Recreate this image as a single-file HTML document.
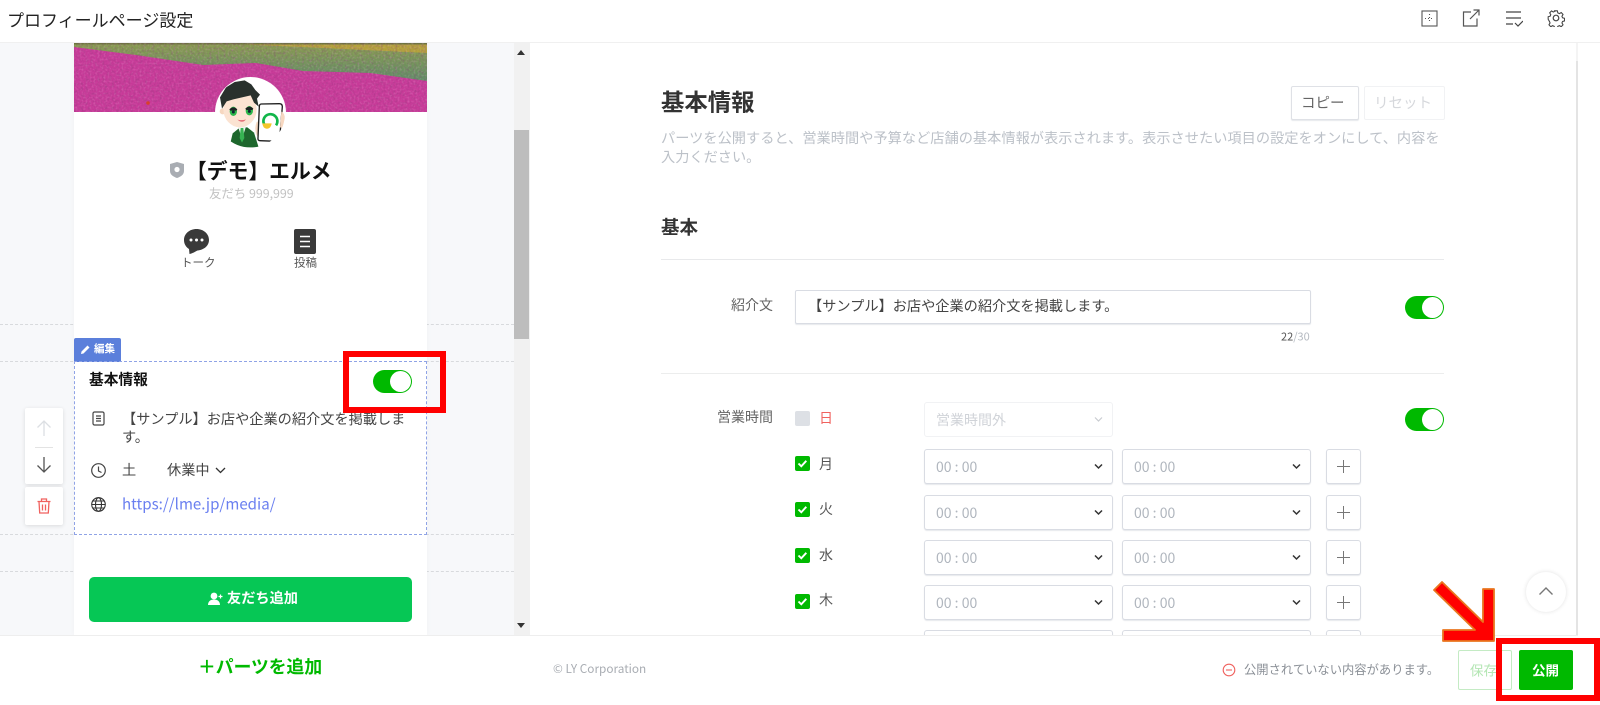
<!DOCTYPE html>
<html lang="ja"><head><meta charset="utf-8"><title>プロフィールページ設定</title>
<style>
*{box-sizing:border-box}
html,body{margin:0;padding:0;width:1600px;height:705px;overflow:hidden;background:#fff;font-family:"Noto Sans CJK JP","Liberation Sans",sans-serif;color:#333}
.a{position:absolute}
.t{position:absolute;white-space:nowrap;line-height:1;transform:translateY(-50%)}
.b{font-weight:700}
.sel{position:absolute;background:#fff;border:1px solid #d9dce3;border-radius:3px;box-shadow:0 1px 1px #e6e8ec}
.sel span{position:absolute;left:11px;top:50%;transform:translateY(-50%);font-size:14px;line-height:1;color:#b0b6be;white-space:nowrap}
.sel svg{position:absolute;right:9px;top:50%;margin-top:-4px}
.plus{position:absolute;width:35px;background:#fff;border:1px solid #d9dce3;border-radius:3px;box-shadow:0 1px 1px #e6e8ec}
.plus:before{content:"";position:absolute;left:10px;top:16px;width:13px;height:1px;background:#777}
.plus:after{content:"";position:absolute;left:16px;top:10px;width:1px;height:13px;background:#777}
.tog{position:absolute;width:39px;height:23px;background:#00b900;border-radius:12px}
.tog:after{content:"";position:absolute;right:1px;top:1px;width:21px;height:21px;background:#fff;border-radius:50%}
.cb{position:absolute;left:795px;width:15px;height:15px;background:#00b900;border-radius:2px}
.cb svg{display:block}
.dash{position:absolute;left:0;width:514px;border-top:1px dashed #d8dadd}
.rr{position:absolute;border:6px solid #f00}
</style></head><body>

<!-- left pane -->
<div class="a" style="left:0;top:43px;width:530px;height:592px;background:#f7f8fa"></div>
<div class="dash" style="top:324px"></div><div class="dash" style="top:361px"></div><div class="dash" style="top:534px"></div><div class="dash" style="top:571px"></div>
<div class="a" style="left:74px;top:43px;width:353px;height:592px;background:#fff;box-shadow:0 0 6px rgba(0,0,0,.03)"></div>

<!-- banner -->
<svg class="a" style="left:74px;top:43px" width="353" height="69" viewBox="0 0 353 69">
<defs>
<filter id="n" x="0" y="0" width="100%" height="100%"><feTurbulence type="fractalNoise" baseFrequency=".42" numOctaves="2" seed="4"/><feColorMatrix values="0 0 0 0 .25  0 0 0 0 .05  0 0 0 0 .2  0 0 0 1.6 -.72"/></filter>
<filter id="m" x="0" y="0" width="100%" height="100%"><feTurbulence type="fractalNoise" baseFrequency=".5" numOctaves="2" seed="9"/><feColorMatrix values="0 0 0 0 .95  0 0 0 0 .5  0 0 0 0 .8  0 0 0 1.6 -.72"/></filter>
<linearGradient id="g" x1="0" y1="0" x2="0" y2="1"><stop offset="0" stop-color="#8a9c4e"/><stop offset="1" stop-color="#5f8d66"/></linearGradient>
</defs>
<rect width="353" height="69" fill="#c73a98"/>
<path d="M0 4 L62 12 L129 22 L182 20 L229 28 L296 30 L353 38 V0 H0Z" fill="url(#g)"/>
<path d="M136 0 H353 V10 L250 5Z" fill="#b3a23a"/>
<rect x="0" y="0" width="353" height="1.500" fill="#6d7440"/>
<rect width="353" height="69" filter="url(#n)" opacity=".6"/>
<rect width="353" height="69" filter="url(#m)" opacity=".35"/>
<circle cx="74" cy="60" r="1.800" fill="#d8402a"/>
</svg>

<!-- avatar -->
<svg class="a" style="left:215px;top:77px" width="71" height="71" viewBox="15 15 213 213">
<defs><clipPath id="c"><circle cx="121.500" cy="121.500" r="105"/></clipPath></defs>
<circle cx="121.500" cy="121.500" r="106.500" fill="#fff"/>
<g clip-path="url(#c)">
<path d="M58 226 L68 184 L90 166 L112 166 L132 182 L146 226Z" fill="#1e672d"/>
<path d="M84 164 L96 200 L108 164Z" fill="#eef5ee"/>
<path d="M92 168h8l3 30-7 14-7-14z" fill="#37b352"/>
<circle cx="38" cy="118" r="9" fill="#f6d7c0"/>
<ellipse cx="90" cy="112" rx="50" ry="54" fill="#fbe3d2"/>
<path d="M36 110 L30 76 L48 46 L74 30 L104 25 L124 37 L136 54 L150 68 L141 80 L146 104 L132 92 L122 70 L96 76 L70 82 L50 88Z" fill="#29312d"/>
<ellipse cx="70" cy="118" rx="11" ry="14" fill="#2cb84c"/><ellipse cx="118" cy="116" rx="11" ry="14" fill="#2cb84c"/>
<path d="M58 112 q12 -12 24 0 l-3 4 h-18z" fill="#1c2422"/><path d="M106 110 q12 -12 24 0 l-3 4 h-18z" fill="#1c2422"/>
<circle cx="70" cy="120" r="4.500" fill="#123"/><circle cx="118" cy="118" r="4.500" fill="#123"/>
<path d="M82 143 q13 3 26 -1 q-11 14 -26 1z" fill="#e56f78"/>
<path d="M140 150 q-8 20 0 40 l10 6 v-50z" fill="#f6d7c0"/>
<path d="M154 96 L208 95 Q217 95 217 104 L209 200 Q209 208 200 208 L150 206 Q143 206 144 198 L148 104 Q148 96 154 96Z" fill="#fff" stroke="#1e1e1e" stroke-width="4"/>
<path d="M163 158 A21 21 0 1 1 198 160" fill="none" stroke="#11b64a" stroke-width="8"/>
<path d="M157 154 h28 q-3 18 -17 16 q-9 -2 -11 -16z" fill="#f3c62c"/>
<path d="M214 118 q12 8 10 22 l-6 28 -8 -2z" fill="#f6d7c0"/>
</g>
</svg>

<svg class="a" style="left:169px;top:161px" width="16" height="18" viewBox="0 0 16 18"><path d="M1 3 L8 1 L15 3 V10 C15 14 11 16 8 17 C5 16 1 14 1 10Z" fill="#a9adb3"/><circle cx="8" cy="8.500" r="2.600" fill="#fff"/></svg>
<div class="t b" style="left:186px;top:170px;font-size:20.800px;color:#111">【デモ】エルメ</div>
<div class="t" style="left:209px;top:193px;font-size:12.400px;color:#c2c2c2">友だち 999,999</div>

<svg class="a" style="left:183px;top:228px" width="27" height="27" viewBox="0 0 27 27"><path d="M13.500 1C6.500 1 1 5.800 1 12c0 4 2 7 5 9l.5 5c3-.5 6-2.500 8-3.500C20.500 22 26 18 26 12 26 5.800 20.500 1 13.500 1Z" fill="#3a3a3a"/><circle cx="8" cy="12" r="1.500" fill="#fff"/><circle cx="13.500" cy="12" r="1.500" fill="#fff"/><circle cx="19" cy="12" r="1.500" fill="#fff"/></svg>
<div class="t" style="left:181px;top:263px;font-size:11.500px;color:#555">トーク</div>
<svg class="a" style="left:294px;top:229px" width="22" height="25" viewBox="0 0 22 25"><rect width="22" height="25" rx="2" fill="#3a3a3a"/><path d="M6 7.500h10M6 12.500h10M6 17.500h10" stroke="#fff" stroke-width="1.600"/></svg>
<div class="t" style="left:294px;top:263px;font-size:11.500px;color:#555">投稿</div>

<!-- edit box -->
<div class="a" style="left:74px;top:338px;width:47px;height:24px;background:#5b7fdb;border-radius:2px 2px 0 0"></div>
<svg class="a" style="left:80px;top:344px" width="11" height="11" viewBox="0 0 11 11"><path d="M1 10 L1.500 7.500 L7.500 1.500 L9.500 3.500 L3.500 9.500Z" fill="#fff"/></svg>
<div class="t b" style="left:94px;top:349px;font-size:10.500px;color:#fff">編集</div>
<div class="a" style="left:74px;top:361px;width:353px;height:174px;border:1px dashed #8fa3e6"></div>
<div class="t b" style="left:89px;top:380px;font-size:14.700px;color:#111">基本情報</div>
<div class="tog" style="left:373px;top:370px"></div>

<svg class="a" style="left:91px;top:410px" width="15" height="17" viewBox="0 0 15 17" fill="none" stroke="#444" stroke-width="1.200"><rect x="2" y="2" width="11" height="13" rx="1.500"/><path d="M5 6h5M5 8.500h5M5 11h5"/></svg>
<div class="t" style="left:122px;top:419px;font-size:14.200px;color:#444">【サンプル】お店や企業の紹介文を掲載しま</div>
<div class="t" style="left:122px;top:437px;font-size:14.200px;color:#444">す。</div>
<svg class="a" style="left:90px;top:462px" width="17" height="17" viewBox="0 0 17 17" fill="none" stroke="#444" stroke-width="1.200"><circle cx="8.500" cy="8.500" r="6.800"/><path d="M8.500 4.500v4.500l3 1.500"/></svg>
<div class="t" style="left:122px;top:470px;font-size:14.200px;color:#444">土</div>
<div class="t" style="left:167px;top:470px;font-size:14.200px;color:#444">休業中</div>
<svg class="a" style="left:215px;top:467px" width="11" height="7" viewBox="0 0 11 7"><path d="M1 1l4.500 4.500L10 1" fill="none" stroke="#333" stroke-width="1.300"/></svg>
<svg class="a" style="left:90px;top:496px" width="17" height="17" viewBox="0 0 17 17" fill="none" stroke="#333" stroke-width="1.100"><circle cx="8.500" cy="8.500" r="6.800"/><ellipse cx="8.500" cy="8.500" rx="3" ry="6.800"/><path d="M1.700 8.500h13.600M2.600 5h11.800M2.600 12h11.800"/></svg>
<div class="t" style="left:122px;top:504px;font-size:15.100px;color:#6a7ff0">https://lme.jp/media/</div>

<!-- side buttons -->
<div class="a" style="left:25px;top:408px;width:38px;height:76px;background:#fff;box-shadow:0 1px 4px rgba(0,0,0,.12);border-radius:2px"></div>
<svg class="a" style="left:36px;top:419px" width="16" height="18" viewBox="0 0 16 18" fill="none" stroke="#dcdfe3" stroke-width="1.300"><path d="M8 17V2M1.500 8.500L8 2l6.500 6.500"/></svg>
<div class="a" style="left:35px;top:447px;width:18px;height:1px;background:#e3e3e3"></div>
<svg class="a" style="left:36px;top:456px" width="16" height="18" viewBox="0 0 16 18" fill="none" stroke="#555" stroke-width="1.300"><path d="M8 1v15M1.500 9.500L8 16l6.500-6.500"/></svg>
<div class="a" style="left:25px;top:487px;width:38px;height:38px;background:#fff;box-shadow:0 1px 4px rgba(0,0,0,.12);border-radius:2px"></div>
<svg class="a" style="left:37px;top:498px" width="14" height="16" viewBox="0 0 14 16" fill="none" stroke="#f0625f" stroke-width="1.300"><path d="M.5 3.500h13M4.500 3.500V1h5v2.500M2 3.500l.7 11.500h8.600L12 3.500M5.500 6.500v6M8.500 6.500v6"/></svg>

<div class="a" style="left:89px;top:577px;width:323px;height:45px;background:#06c755;border-radius:5px"></div>
<svg class="a" style="left:208px;top:592px" width="15" height="14" viewBox="0 0 15 14"><circle cx="6" cy="4" r="3.400" fill="#fff"/><path d="M0 13c0-4 3-5.500 6-5.500s6 1.500 6 5.500Z" fill="#fff"/><path d="M10.500 4.500h4M12.500 2.500v4" stroke="#fff" stroke-width="1.200"/></svg>
<div class="t b" style="left:227px;top:598px;font-size:14.200px;color:#fff">友だち追加</div>

<!-- scrollbar -->
<div class="a" style="left:514px;top:43px;width:16px;height:592px;background:#f1f1f1"></div>
<div class="a" style="left:514px;top:130px;width:15px;height:209px;background:#bdbdbd"></div>
<svg class="a" style="left:516px;top:49px" width="10" height="6"><path d="M1 6 L5 1 L9 6Z" fill="#333"/></svg>
<svg class="a" style="left:516px;top:623px" width="10" height="6"><path d="M1 0 L5 5 L9 0Z" fill="#333"/></svg>

<!-- right pane -->
<div class="a" style="left:530px;top:43px;width:1048px;height:592px;background:#fff"></div>
<div class="a" style="left:1576px;top:43px;width:2px;height:592px;background:#f4f4f4"></div>
<div class="a" style="left:1576px;top:61px;width:2px;height:574px;background:#e4e4e4"></div>

<div class="t b" style="left:661px;top:101px;font-size:23.400px;color:#333">基本情報</div>
<div class="a" style="left:1291px;top:86px;width:68px;height:34px;background:#fff;border:1px solid #dfe1e6;border-radius:2px;box-shadow:0 1px 1px #e6e8ec"></div>
<div class="t" style="left:1301px;top:103px;font-size:14.500px;color:#666">コピー</div>
<div class="a" style="left:1364px;top:86px;width:81px;height:34px;background:#fff;border:1px solid #f1f2f4;border-radius:2px"></div>
<div class="t" style="left:1374px;top:103px;font-size:14.500px;color:#d6d8dc">リセット</div>
<div class="t" style="left:661px;top:138px;font-size:14.200px;color:#bcc1c8;letter-spacing:.03px">パーツを公開すると、営業時間や予算など店舗の基本情報が表示されます。表示させたい項目の設定をオンにして、内容を</div>
<div class="t" style="left:661px;top:157px;font-size:14.200px;color:#bcc1c8">入力ください。</div>
<div class="t b" style="left:661px;top:227px;font-size:18.500px;color:#333">基本</div>
<div class="a" style="left:661px;top:259px;width:783px;height:1px;background:#e8e9eb"></div>
<div class="t" style="left:731px;top:305px;font-size:14px;color:#666">紹介文</div>
<div class="a" style="left:795px;top:290px;width:516px;height:34px;background:#fff;border:1px solid #d9dce3;border-radius:2px;box-shadow:0 1px 1px #e6e8ec"></div>
<div class="t" style="left:808px;top:306px;font-size:14.200px;color:#444">【サンプル】お店や企業の紹介文を掲載します。</div>
<div class="tog" style="left:1405px;top:296px"></div>
<div class="t" style="left:1281px;top:337px;font-size:11px;color:#555">22<span style="color:#b5bac1">/30</span></div>
<div class="a" style="left:661px;top:373px;width:783px;height:1px;background:#eceded"></div>

<div class="t" style="left:717px;top:417px;font-size:14px;color:#666">営業時間</div>
<div class="a" style="left:795px;top:411px;width:15px;height:15px;background:#dde0e5;border-radius:2px"></div>
<div class="t" style="left:819px;top:418px;font-size:14px;color:#f0625f">日</div>
<div class="sel" style="left:924px;top:402px;width:189px;height:35px;border-color:#f1f2f4;box-shadow:none"><span style="color:#d0d3d8">営業時間外</span><svg width="9" height="7" viewBox="0 0 9 7"><path d="M1 1.500l3.500 3.500L8 1.500" fill="none" stroke="#c9ccd1" stroke-width="1.200"/></svg></div>
<div class="tog" style="left:1405px;top:408px"></div>

<svg width="0" height="0" style="position:absolute"><defs><path id="ck" d="M3.500 7.500l2.800 2.800 5-5.500" fill="none" stroke="#fff" stroke-width="1.900"/><path id="ch" d="M1 1.500l3.500 3.500L8 1.500" fill="none" stroke="#333" stroke-width="1.500"/></defs></svg>

<div class="cb" style="top:456px"><svg width="15" height="15"><use href="#ck"/></svg></div>
<div class="t" style="left:819px;top:464px;font-size:14px;color:#555">月</div>
<div class="sel" style="left:924px;top:449px;width:189px;height:35px"><span>00 : 00</span><svg width="9" height="7"><use href="#ch"/></svg></div>
<div class="sel" style="left:1122px;top:449px;width:189px;height:35px"><span>00 : 00</span><svg width="9" height="7"><use href="#ch"/></svg></div>
<div class="plus" style="left:1326px;top:449px;height:35px"></div>

<div class="cb" style="top:502px"><svg width="15" height="15"><use href="#ck"/></svg></div>
<div class="t" style="left:819px;top:509px;font-size:14px;color:#555">火</div>
<div class="sel" style="left:924px;top:495px;width:189px;height:35px"><span>00 : 00</span><svg width="9" height="7"><use href="#ch"/></svg></div>
<div class="sel" style="left:1122px;top:495px;width:189px;height:35px"><span>00 : 00</span><svg width="9" height="7"><use href="#ch"/></svg></div>
<div class="plus" style="left:1326px;top:495px;height:35px"></div>

<div class="cb" style="top:548px"><svg width="15" height="15"><use href="#ck"/></svg></div>
<div class="t" style="left:819px;top:555px;font-size:14px;color:#555">水</div>
<div class="sel" style="left:924px;top:540px;width:189px;height:35px"><span>00 : 00</span><svg width="9" height="7"><use href="#ch"/></svg></div>
<div class="sel" style="left:1122px;top:540px;width:189px;height:35px"><span>00 : 00</span><svg width="9" height="7"><use href="#ch"/></svg></div>
<div class="plus" style="left:1326px;top:540px;height:35px"></div>

<div class="cb" style="top:594px"><svg width="15" height="15"><use href="#ck"/></svg></div>
<div class="t" style="left:819px;top:600px;font-size:14px;color:#555">木</div>
<div class="sel" style="left:924px;top:585px;width:189px;height:35px"><span>00 : 00</span><svg width="9" height="7"><use href="#ch"/></svg></div>
<div class="sel" style="left:1122px;top:585px;width:189px;height:35px"><span>00 : 00</span><svg width="9" height="7"><use href="#ch"/></svg></div>
<div class="plus" style="left:1326px;top:585px;height:35px"></div>

<div class="sel" style="left:924px;top:630px;width:189px;height:35px"></div>
<div class="sel" style="left:1122px;top:630px;width:189px;height:35px"></div>
<div class="plus" style="left:1326px;top:630px;height:35px"></div>

<!-- up button -->
<div class="a" style="left:1526px;top:572px;width:40px;height:40px;background:#fff;border-radius:50%;box-shadow:0 0 4px rgba(0,0,0,.12)"></div>
<svg class="a" style="left:1538px;top:586px" width="16" height="10" viewBox="0 0 16 10"><path d="M1.500 8.500L8 2l6.500 6.500" fill="none" stroke="#777" stroke-width="1.400"/></svg>

<!-- footer -->
<div class="a" style="left:0;top:635px;width:530px;height:61px;background:#fff;border-top:1px solid #eee"></div>
<div class="a" style="left:530px;top:635px;width:1048px;height:61px;background:#fff;border-top:1px solid #eee"></div>
<div class="t b" style="left:198px;top:667px;font-size:17.800px;color:#00b900">＋パーツを追加</div>
<div class="t" style="left:553px;top:669px;font-size:11.800px;color:#a9adb3">© LY Corporation</div>
<svg class="a" style="left:1222px;top:663px" width="14" height="14" viewBox="0 0 14 14" fill="none" stroke="#f0625f" stroke-width="1.100"><circle cx="7" cy="7" r="5.800"/><path d="M4 7h6"/></svg>
<div class="t" style="left:1244px;top:669px;font-size:12.300px;color:#8b9097">公開されていない内容があります。</div>
<div class="a" style="left:1458px;top:650px;width:54px;height:40px;background:#fff;border:1px solid #c4ebc4;border-radius:2px"></div>
<div class="t" style="left:1470px;top:670px;font-size:13.500px;color:#b4e6b4">保存</div>
<div class="a" style="left:1519px;top:650px;width:54px;height:40px;background:#00b900;border-radius:2px"></div>
<div class="t b" style="left:1532px;top:670px;font-size:13.500px;color:#fff">公開</div>

<!-- annotations -->
<div class="rr" style="left:343px;top:351px;width:103px;height:62px"></div>
<div class="rr" style="left:1496px;top:638px;width:104px;height:63px"></div>
<svg class="a" style="left:1429px;top:578px" width="70" height="64" viewBox="0 0 70 64"><polygon points="13,4 54,44 54,11 65,11 65,63 14,63 14,52 46,52 5,12" fill="#f00" stroke="#e9761e" stroke-width="1.800" stroke-linejoin="round"/></svg>

<!-- header -->
<div class="a" style="left:0;top:0;width:1600px;height:43px;background:#fff;border-bottom:1px solid #f0f0f0"></div>
<div class="t" style="left:7px;top:19px;font-size:17px;color:#222">プロフィールページ設定</div>
<svg class="a" style="left:1421px;top:10px" width="17" height="17" viewBox="0 0 17 17" fill="none" stroke="#555" stroke-width="1.100"><rect x="1" y="1" width="15" height="15"/><path d="M8.500 4v9M4 8.500h9" stroke-dasharray="1 2"/></svg>
<svg class="a" style="left:1462px;top:9px" width="18" height="18" viewBox="0 0 18 18" fill="none" stroke="#555" stroke-width="1.200"><path d="M9 3H1.500v14H15V9.500M8 10l9-9M11.500 1H17v5.500"/></svg>
<svg class="a" style="left:1505px;top:10px" width="18" height="17" viewBox="0 0 18 17" fill="none" stroke="#444" stroke-width="1.200"><path d="M1 2h15M1 8h15M1 14h7M10 13l3 3 5-5"/></svg>
<svg class="a" style="left:1547px;top:9px" width="18" height="18" viewBox="0 0 18 18" fill="none" stroke="#444" stroke-width="1.200"><circle cx="9" cy="9" r="2.800"/><path d="M7.500 1h3l.5 2.300 1.800.8 2-1.200 2 2.200-1.200 2 .7 1.700 2.200.6v2.800l-2.200.6-.7 1.700 1.200 2-2 2.200-2-1.200-1.800.8-.5 2.200h-3l-.5-2.200-1.800-.8-2 1.200-2-2.200 1.200-2-.7-1.700L.3 10.400V7.600l2.200-.6.700-1.700-1.200-2 2-2.200 2 1.200 1.800-.8Z" transform="translate(.9 .9) scale(.9)"/></svg>
</body></html>
